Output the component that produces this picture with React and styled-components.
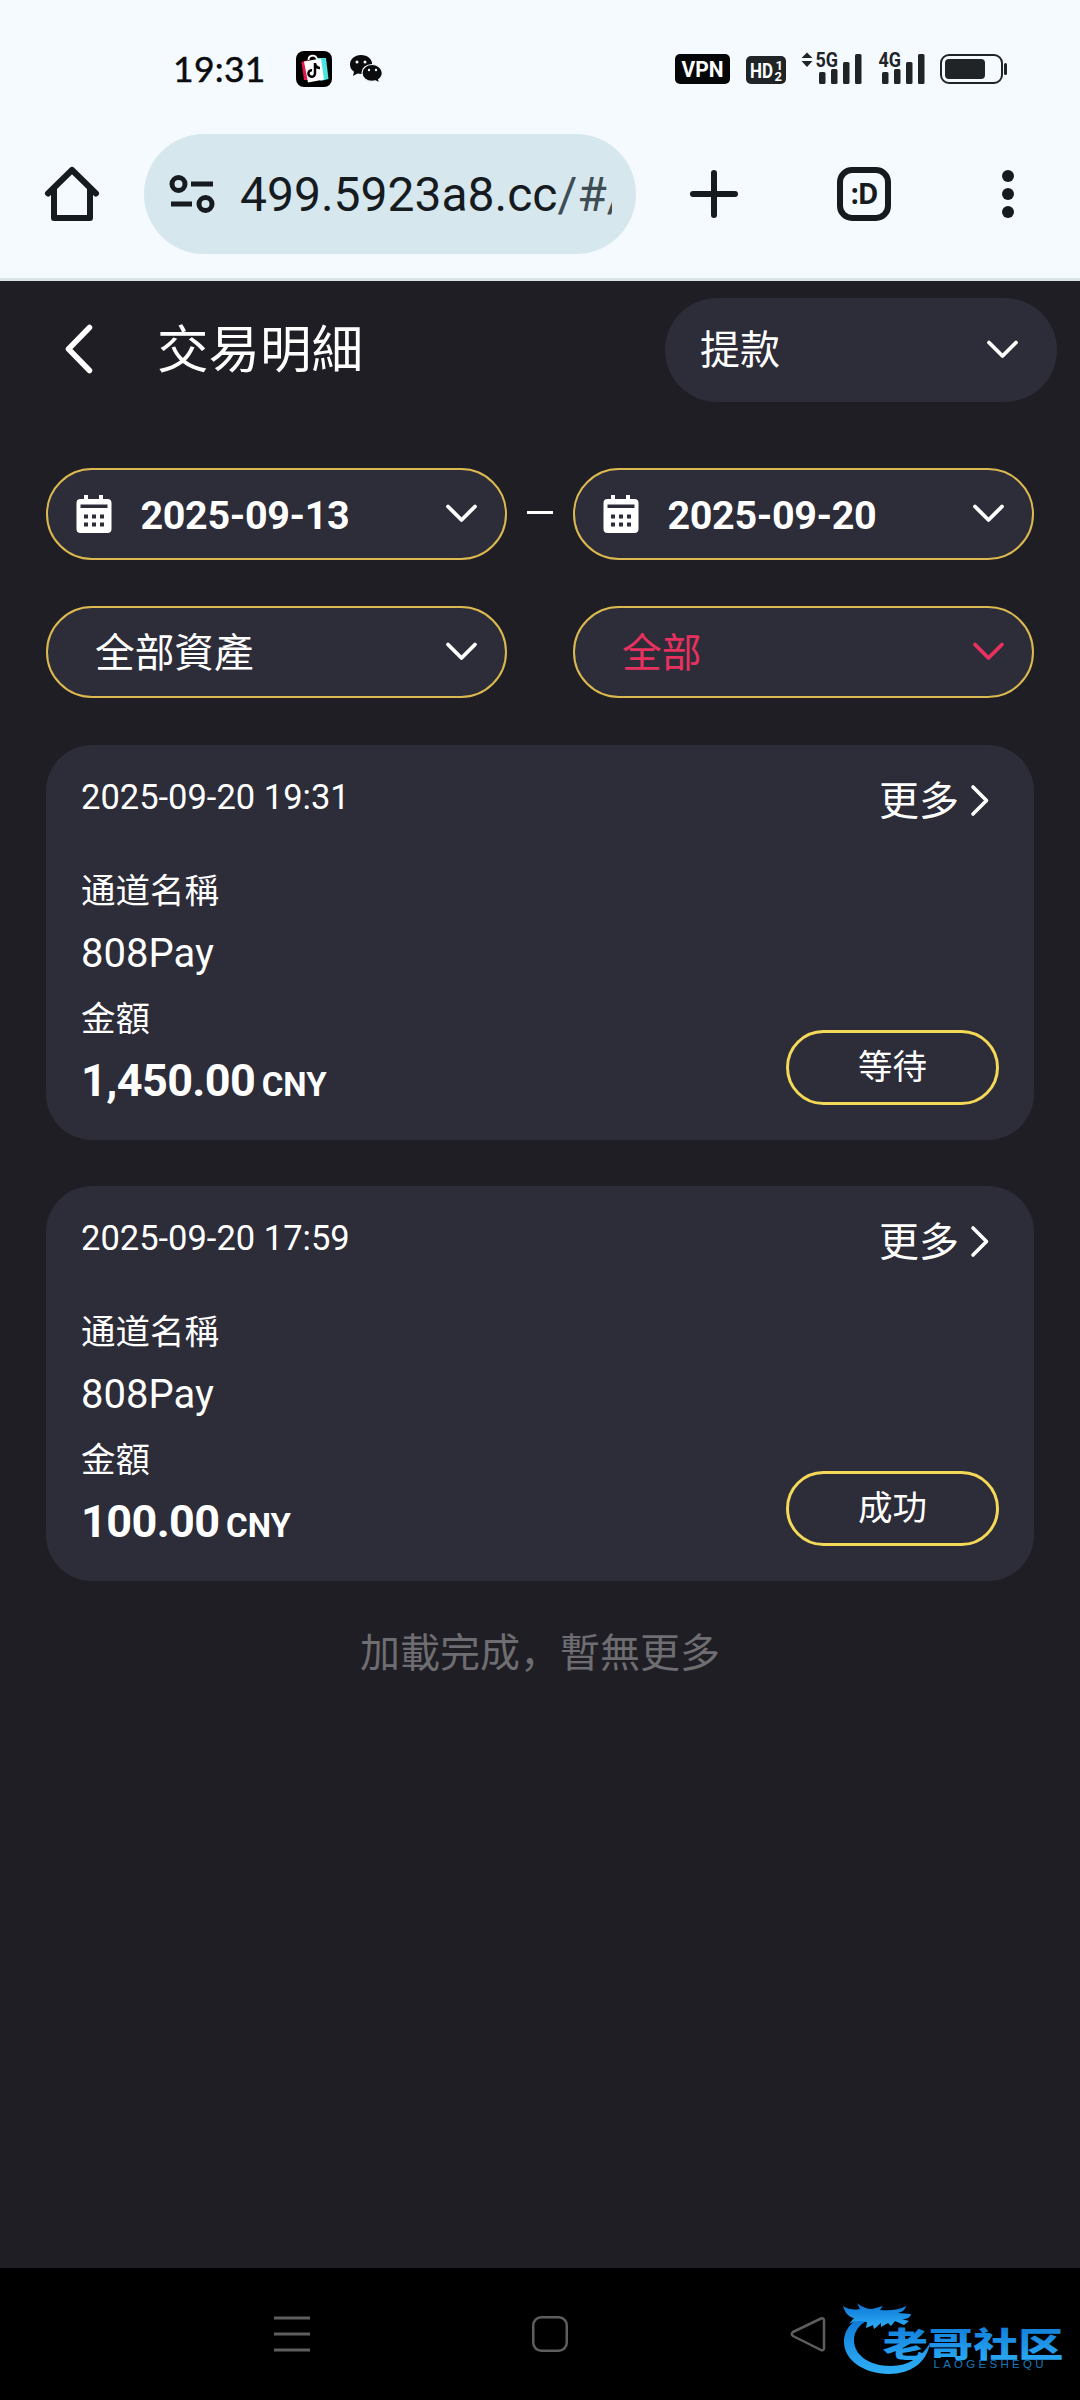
import { useState } from "react";
import styled, { createGlobalStyle } from "styled-components";

const GlobalStyle = createGlobalStyle`
  * {
    box-sizing: border-box;
  }

  body {
    margin: 0;
    background: #1f1e24;
    font-family: Roboto, "Noto Sans CJK SC", sans-serif;
  }

  button {
    font-family: inherit;
    margin: 0;
    cursor: pointer;
  }

  svg {
    display: block;
    flex: none;
    overflow: visible;
  }
`;

const Screen = styled.div`
  width: 1080px;
  height: 2400px;
  display: flex;
  flex-direction: column;
  overflow: hidden;
  background: #1f1e24;
  color: #fff;
`;

const StatusBar = styled.div`
  height: 134px;
  padding: 50px 73px 0 173px;
  display: flex;
  justify-content: space-between;
  align-items: flex-start;
  background: #f5fafe;
  color: #0a0c0e;
`;

const StatusGroup = styled.div`
  display: flex;
  align-items: center;
  height: 38px;
`;

const SystemStatus = styled(StatusGroup)`
  gap: 15.5px;
`;

const Clock = styled.div`
  width: 123px;
  font-family: Lato, sans-serif;
  font-size: 35.5px;
  line-height: 37px;
  padding-bottom: 1px;
  letter-spacing: 0.3px;
  -webkit-text-stroke: 0.5px #0a0c0e;
`;

const AppIcons = styled.div`
  display: flex;
  align-items: center;
  gap: 17px;
`;

const BrowserBar = styled.div`
  height: 147px;
  display: flex;
  align-items: flex-start;
  background: #f5fafe;
  border-bottom: 3px solid #dae3e8;
  color: #151b1f;
`;

const BrowserButton = styled.button`
  width: ${(props) => props.$width}px;
  height: 120px;
  padding: 0;
  border: none;
  background: none;
  color: inherit;
  display: flex;
  align-items: center;
  justify-content: center;
`;

const AddressBar = styled.div`
  width: 492px;
  height: 120px;
  padding: 0 24px 0 25px;
  border-radius: 60px;
  background: #d7e7ee;
  display: flex;
  align-items: center;
  gap: 25px;
`;

const Url = styled.div`
  flex: 1;
  overflow: hidden;
  white-space: nowrap;
  padding-top: 2px;
  font-size: 48px;
  line-height: 60px;
  color: #151b1f;

  span {
    color: #3e4c53;
  }
`;

const TabCount = styled.div`
  width: 54px;
  height: 54px;
  border: 6px solid #151b1f;
  border-radius: 15px;
  font-family: "Open Sans", sans-serif;
  font-size: 28px;
  font-weight: 700;
  line-height: 40px;
  letter-spacing: -1px;
  text-align: center;
`;

const PageHeader = styled.header`
  height: 187px;
  padding: 17px 23px 0 65px;
  display: flex;
  align-items: flex-start;
`;

const BackButton = styled.button`
  width: 92px;
  height: 104px;
  padding: 0 0 2px;
  border: none;
  background: none;
  display: flex;
  align-items: center;
`;

const Title = styled.h1`
  flex: 1;
  margin: 3px 0 0;
  font-size: 51.5px;
  font-weight: 400;
  line-height: 100px;
`;

const PillText = styled.span`
  padding-bottom: 6px;
`;

const TypeSelect = styled.button`
  width: 392px;
  height: 104px;
  padding: 0 38px 0 35px;
  border: none;
  border-radius: 52px;
  background: #2d2c39;
  color: #fff;
  font-size: 40px;
  display: flex;
  align-items: center;
  justify-content: space-between;
`;

const Filters = styled.div`
  padding: 0 46px;
  display: grid;
  grid-template-columns: 461px 66px 461px;
  row-gap: 46px;
`;

const FilterPill = styled.button`
  height: 92px;
  padding: 0 27.5px 0 ${(props) => (props.$date ? "28px" : "47px")};
  border: 2px solid #dcb950;
  border-radius: 46px;
  background: #2d2c39;
  color: ${(props) => (props.$active ? "#e8315f" : "#fff")};
  font-size: 39.7px;
  display: flex;
  align-items: center;
  justify-content: space-between;
`;

const DateValue = styled.span`
  flex: 1;
  padding: 2px 0 0 28.5px;
  text-align: left;
  font-size: 39.5px;
  font-weight: 700;
  letter-spacing: -0.35px;
`;

const RangeDash = styled.span`
  width: 26px;
  height: 3px;
  margin: 43px auto 0;
  background: #fff;
`;

const List = styled.div`
  flex: 1;
  padding: 47px 46px 0;
  display: flex;
  flex-direction: column;
  gap: 46px;
`;

const Card = styled.article`
  height: 395px;
  padding: 29px 35px 35px;
  border-radius: 46px;
  background: #2d2c39;
  display: flex;
  justify-content: space-between;
`;

const CardInfo = styled.div`
  display: flex;
  flex-direction: column;
`;

const CardActions = styled.div`
  display: flex;
  flex-direction: column;
  align-items: flex-end;
  justify-content: space-between;
`;

const CreatedAt = styled.time`
  margin-bottom: 42px;
  font-size: 34.5px;
  line-height: 46px;
`;

const Label = styled.div`
  font-size: 34.5px;
  line-height: 58px;
`;

const Channel = styled.div`
  margin: 3px 0 5px;
  font-size: 40px;
  line-height: 62px;
`;

const Amount = styled.div`
  margin-top: 1px;
  font-size: 45px;
  font-weight: 700;
  line-height: 64px;
  letter-spacing: -0.6px;
`;

const Currency = styled.span`
  margin-left: 6.5px;
  font-size: 33px;
  letter-spacing: 0;
`;

const MoreButton = styled.button`
  height: 55px;
  padding: 1px 9px 0 0;
  border: none;
  background: none;
  color: #fff;
  font-size: 40px;
  line-height: 54px;
  display: flex;
  align-items: center;
  gap: 11px;

  svg {
    margin-bottom: 3px;
  }
`;

const Status = styled.div`
  width: 213px;
  height: 75px;
  border: 3px solid #f4d857;
  border-radius: 38px;
  font-size: 34.5px;
  line-height: 68px;
  text-align: center;
`;

const EndText = styled.p`
  margin: -3px 0 0;
  color: #6e6d71;
  font-size: 40px;
  line-height: 60px;
  text-align: center;
`;

const SystemNav = styled.nav`
  height: 132px;
  padding-left: 274px;
  background: #000;
  display: flex;
  align-items: center;
`;

const NavIcons = styled.div`
  width: 552px;
  display: flex;
  align-items: center;
  justify-content: space-between;
`;

const Watermark = styled.div`
  margin: 12px 0 0 16px;
`;

const Chevron = () => (
  <svg width="33" height="20" viewBox="0 0 33 20" fill="none">
    <path d="M3 2.500 16.500 16 30 2.500" stroke="currentColor" strokeWidth="3.800" strokeLinecap="round" strokeLinejoin="round" />
  </svg>
);

const CalendarIcon = () => (
  <svg width="36" height="40" viewBox="0 0 36 40">
    <path
      fill="#fff"
      fillRule="evenodd"
      d="M8 1h4v4h11V1h4v4h4.500a4 4 0 0 1 4 4v26a4 4 0 0 1-4 4h-27a4 4 0 0 1-4-4V9a4 4 0 0 1 4-4H8V1Zm-3.500 9.500v3.500h27v-3.500ZM8 20.500v4h4v-4Zm8 0v4h4v-4Zm8 0v4h4v-4ZM8 28.500v4h4v-4Zm8 0v4h4v-4Zm8 0v4h4v-4Z"
    />
  </svg>
);

const ShopIcon = () => (
  <svg width="36" height="36" viewBox="0 0 36 36">
    <rect width="36" height="36" rx="8" fill="#000" />
    <path d="M5.500 11 12 9v20H8Z" fill="#e5174f" />
    <path d="M20 7h10l2.500 21-8 2Z" fill="#4be3e0" />
    <path d="M8 10.500 25 7.500l3 21-16 3Z" fill="#fff" />
    <path d="M12.500 9c0-5 7-6 8.500-1" fill="none" stroke="#fff" strokeWidth="1.800" />
    <path d="M19 12v10.500a3.300 3.300 0 1 1-3-3.300M19 13c1 3 3 4 5 4" fill="none" stroke="#000" strokeWidth="2.500" />
  </svg>
);

const ChatIcon = () => (
  <svg width="34" height="30" viewBox="0 0 34 30">
    <path d="M12 1C5.500 1 1 5.300 1 10.500c0 3 1.500 5.600 4 7.300L4 22l4.500-2.500c1.200.3 2.300.4 3.500.4 6.300 0 11.200-4.200 11.200-9.500S18.500 1 12 1Z" fill="#0a0c0e" />
    <path
      d="M23 10.500c-5.700 0-10 3.700-10 8.400s4.300 8.500 10 8.500c1.200 0 2.400-.2 3.500-.5L30.500 29l-.8-3.600c2.300-1.600 3.600-3.900 3.600-6.500 0-4.700-4.600-8.400-10.300-8.400Z"
      fill="#0a0c0e"
      stroke="#f5fafe"
      strokeWidth="1.200"
    />
    <circle cx="8" cy="8" r="1.500" fill="#f5fafe" />
    <circle cx="16" cy="8" r="1.500" fill="#f5fafe" />
    <circle cx="20" cy="16" r="1.200" fill="#f5fafe" />
    <circle cx="27" cy="16" r="1.200" fill="#f5fafe" />
  </svg>
);

const VpnBadge = () => (
  <svg width="55" height="30" viewBox="0 0 55 30">
    <rect width="55" height="30" rx="5" fill="#050607" />
    <text x="6.500" y="23" textLength="42" lengthAdjust="spacingAndGlyphs" fill="#fff" fontFamily="Roboto" fontWeight="700" fontSize="22">
      VPN
    </text>
  </svg>
);

const HdBadge = () => (
  <svg width="40" height="30" viewBox="0 -2 40 30">
    <rect width="40" height="28" rx="5" fill="#202427" />
    <g fill="#fff" fontFamily="Roboto" fontWeight="700">
      <text x="4" y="21.500" fontSize="21" textLength="23" lengthAdjust="spacingAndGlyphs">
        HD
      </text>
      <text x="29.500" y="13.500" fontSize="13">
        1
      </text>
      <text x="28.500" y="24.500" fontSize="13">
        2
      </text>
    </g>
  </svg>
);

const Signal = ({ label, arrows }) => {
  const left = arrows ? 0 : 14;

  return (
    <svg width={61 - left} height="38" viewBox={`${left} 0 ${61 - left} 38`} fill="#202427">
      {arrows && <path d="m6 2.500 5.500 5.500H.5ZM.5 11h11L6 17Z" />}
      <rect x="18" y="22" width="6.500" height="12" rx="1.500" />
      <rect x="30" y="19" width="6.500" height="15" rx="1.500" />
      <rect x="42" y="12" width="6.500" height="22" rx="1.500" />
      <rect x="54" y="4" width="6.500" height="30" rx="1.500" />
      <text x="14.500" y="17" fontFamily="Roboto" fontWeight="700" fontSize="20.500" textLength="22.500" lengthAdjust="spacingAndGlyphs">
        {label}
      </text>
    </svg>
  );
};

const BatteryIcon = () => (
  <svg width="67" height="30" viewBox="0 0 67 30">
    <rect x="1" y="1" width="61" height="28" rx="8" fill="none" stroke="#202427" strokeWidth="2" />
    <rect x="5" y="5" width="40" height="20" rx="4" fill="#202427" />
    <rect x="64" y="9" width="3" height="12" rx="1.500" fill="#202427" />
  </svg>
);

const TuneIcon = () => (
  <svg width="46" height="40" viewBox="0 0 46 40" fill="none" stroke="currentColor" strokeWidth="5">
    <circle cx="9.500" cy="10" r="6.500" />
    <path d="M22 10h22M2 30h21" />
    <circle cx="36.500" cy="30" r="6.500" />
  </svg>
);

const HomeIcon = () => (
  <svg width="56" height="56" viewBox="0 0 56 56" fill="none" stroke="currentColor" strokeWidth="6" strokeLinecap="round" strokeLinejoin="round">
    <path d="M4 27.500 28 4l24 23.500" />
    <path d="M10 23v29h36V23" />
  </svg>
);

// dragon ring with the community name laid over its right side
const CommunityLogo = () => (
  <svg width="226" height="82" viewBox="0 0 226 82">
    <defs>
      <linearGradient id="ring" x1="0" y1="0" x2="0" y2="1">
        <stop offset="0" stopColor="#0b74d4" />
        <stop offset="1" stopColor="#2fb0f8" />
      </linearGradient>
    </defs>
    <g fill="url(#ring)">
      <path d="M29 15C11 19 2 30 2 43c0 18 20 32 45 32 21 0 38-11 41-31-8 14-22 23-39 23-22 0-37-11-37-26 0-10 7-18 20-22Z" />
      <path d="M1 7c6 4 12 4 17 3l-3-6c5 4 10 6 15 6l11-3-3 4c10 1 19 0 26-4-1 4-4 6-8 7l13 1c-1 4-4 5-9 5l7 2-5 4-9-4-4 5-3-3-7 4v-4l-7 6-1-4-7 3 1-6c-9-2-13-1-18 2l5-6C6 18 3 13 1 7Z" />
    </g>
    <text
      x="40"
      y="58"
      fill="url(#ring)"
      fontFamily="Noto Sans CJK SC"
      fontWeight="900"
      fontSize="34"
      textLength="136"
      transform="translate(-12.500 0) scale(1.330 1)"
    >
      老哥社区
    </text>
    <text x="91.500" y="69" fill="#1779bd" fontFamily="Liberation Sans" fontSize="11.500" textLength="110">
      LAOGESHEQU
    </text>
  </svg>
);

const transactions = [
  { id: 1, createdAt: "2025-09-20 19:31", channel: "808Pay", amount: "1,450.00", status: "等待" },
  { id: 2, createdAt: "2025-09-20 17:59", channel: "808Pay", amount: "100.00", status: "成功" },
];

function Transaction({ item }) {
  return (
    <Card>
      <CardInfo>
        <CreatedAt>{item.createdAt}</CreatedAt>
        <Label>通道名稱</Label>
        <Channel>{item.channel}</Channel>
        <Label>金額</Label>
        <Amount>
          {item.amount}
          <Currency>CNY</Currency>
        </Amount>
      </CardInfo>
      <CardActions>
        <MoreButton>
          更多
          <svg width="20" height="33" viewBox="0 0 20 33" fill="none">
            <path d="M3 3 16.500 16.500 3 30" stroke="currentColor" strokeWidth="3.600" strokeLinecap="round" strokeLinejoin="round" />
          </svg>
        </MoreButton>
        <Status>{item.status}</Status>
      </CardActions>
    </Card>
  );
}

export default function App() {
  const [range] = useState({ from: "2025-09-13", to: "2025-09-20" });

  return (
    <Screen>
      <GlobalStyle />

      <StatusBar>
        <StatusGroup>
          <Clock>19:31</Clock>
          <AppIcons>
            <ShopIcon />
            <ChatIcon />
          </AppIcons>
        </StatusGroup>
        <SystemStatus>
          <VpnBadge />
          <HdBadge />
          <Signal label="5G" arrows />
          <Signal label="4G" />
          <BatteryIcon />
        </SystemStatus>
      </StatusBar>

      <BrowserBar>
        <BrowserButton $width={144}>
          <HomeIcon />
        </BrowserButton>
        <AddressBar>
          <TuneIcon />
          <Url>
            499.5923a8.cc<span>/#/</span>
          </Url>
        </AddressBar>
        <BrowserButton $width={156}>
          <svg width="48" height="48" viewBox="0 0 48 48" stroke="currentColor" strokeWidth="6" strokeLinecap="round">
            <path d="M24 3v42M3 24h42" />
          </svg>
        </BrowserButton>
        <BrowserButton $width={144}>
          <TabCount>:D</TabCount>
        </BrowserButton>
        <BrowserButton $width={144}>
          <svg width="12" height="48" viewBox="0 0 12 48" fill="currentColor">
            <circle cx="6" cy="6" r="6" />
            <circle cx="6" cy="24" r="6" />
            <circle cx="6" cy="42" r="6" />
          </svg>
        </BrowserButton>
      </BrowserBar>

      <PageHeader>
        <BackButton>
          <svg width="28" height="50" viewBox="0 0 28 50" fill="none">
            <path d="M24.500 3.500 3.500 25l21 21.500" stroke="#fff" strokeWidth="5.500" strokeLinecap="round" strokeLinejoin="round" />
          </svg>
        </BackButton>
        <Title>交易明細</Title>
        <TypeSelect>
          <PillText>提款</PillText>
          <Chevron />
        </TypeSelect>
      </PageHeader>

      <Filters>
        <FilterPill $date>
          <CalendarIcon />
          <DateValue>{range.from}</DateValue>
          <Chevron />
        </FilterPill>
        <RangeDash />
        <FilterPill $date>
          <CalendarIcon />
          <DateValue>{range.to}</DateValue>
          <Chevron />
        </FilterPill>
        <FilterPill>
          <PillText>全部資產</PillText>
          <Chevron />
        </FilterPill>
        <span />
        <FilterPill $active>
          <PillText>全部</PillText>
          <Chevron />
        </FilterPill>
      </Filters>

      <List>
        {transactions.map((item) => (
          <Transaction key={item.id} item={item} />
        ))}
        <EndText>加載完成，暫無更多</EndText>
      </List>

      <SystemNav>
        <NavIcons>
          <svg width="36" height="36" viewBox="0 0 36 36" stroke="#5e5e5e" strokeWidth="3">
            <path d="M0 2h36M0 18h36M0 34h36" />
          </svg>
          <svg width="36" height="36" viewBox="0 0 36 36" fill="none" stroke="#5e5e5e" strokeWidth="2.500">
            <rect x="1.250" y="1.250" width="33.500" height="33.500" rx="8" />
          </svg>
          <svg width="36" height="36" viewBox="0 0 36 36" fill="none" stroke="#5e5e5e" strokeWidth="2.500" strokeLinejoin="round">
            <path d="M31 2.500 3 16q-2.500 2 0 4l28 14q3 1 3-2V4.500q0-3-3-2Z" />
          </svg>
        </NavIcons>
        <Watermark>
          <CommunityLogo />
        </Watermark>
      </SystemNav>
    </Screen>
  );
}
